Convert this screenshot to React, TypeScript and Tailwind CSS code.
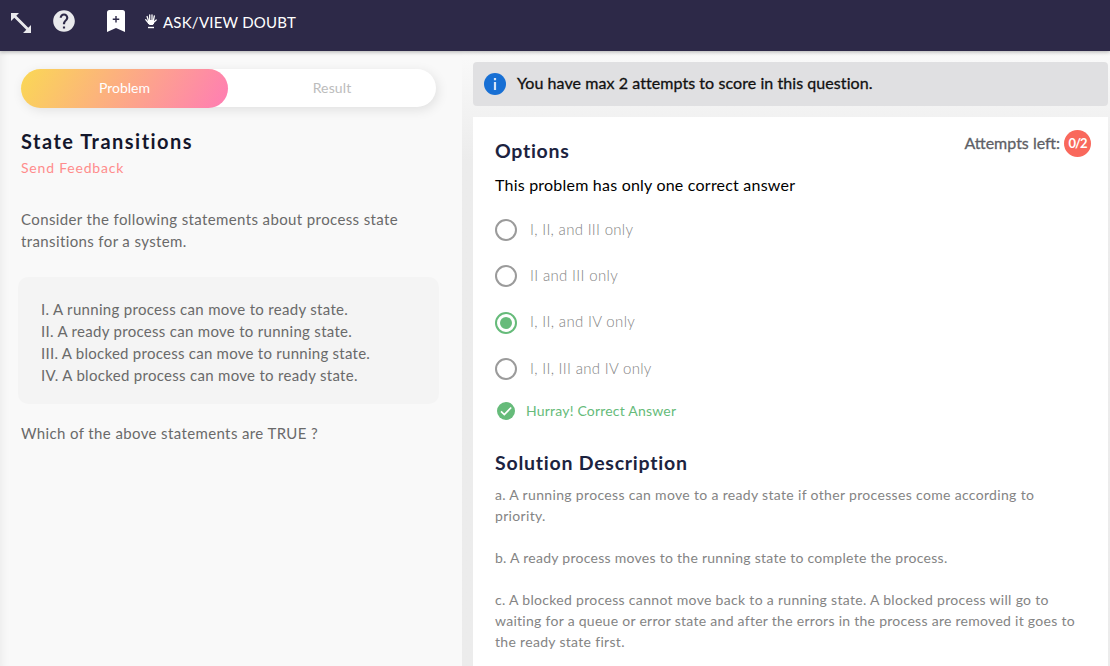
import type { ReactNode } from "react";

const statements = [
  { text: "I. A running process can move to ready state.", className: "tracking-[0.31px]" },
  { text: "II. A ready process can move to running state.", className: "tracking-[0.3px]" },
  { text: "III. A blocked process can move to running state.", className: "tracking-[0.26px]" },
  { text: "IV. A blocked process can move to ready state.", className: "tracking-[0.3px]" },
];

const options = [
  { text: "I, II, and III only", checked: false, className: "tracking-[0.304px]" },
  { text: "II and III only", checked: false, className: "tracking-[0.34px]" },
  { text: "I, II, and IV only", checked: true, className: "tracking-[0.34px]" },
  { text: "I, II, III and IV only", checked: false, className: "tracking-[0.31px]" },
];

function Header() {
  return (
    <header className="relative z-10 flex h-[51px] shrink-0 items-start bg-[#2d2948] text-white shadow-[0_1px_4px_rgba(0,0,0,0.3)]">
      <svg className="mt-[13px] ml-[11px] h-5 w-5 text-[#e9e9ec]" viewBox="0 0 20 20" fill="currentColor">
        <path d="M0 0h8L5.300 2.700 17.300 14.700 20 12v8h-8l3.300-3.300-12-12L0 8z" />
      </svg>
      <svg className="mt-[8px] ml-[20px] h-[26px] w-[26px] text-[#e9e9ec]" viewBox="0 0 24 24" fill="currentColor">
        <path d="M12 2C6.480 2 2 6.480 2 12s4.480 10 10 10 10-4.480 10-10S17.520 2 12 2zm1 17h-2v-2h2v2zm2.070-7.750-.9.920C13.450 12.900 13 13.500 13 15h-2v-.5c0-1.100.450-2.100 1.170-2.830l1.240-1.260c.370-.360.590-.860.590-1.410 0-1.100-.9-2-2-2s-2 .9-2 2H8c0-2.210 1.790-4 4-4s4 1.790 4 4c0 .880-.360 1.680-.930 2.250z" />
      </svg>
      <svg className="mt-[10px] ml-[30px] h-[22px] w-[18px]" viewBox="0 0 18 22">
        <path d="M2.500 0h13A2.500 2.500 0 0 1 18 2.500V22l-9-4-9 4V2.500A2.500 2.500 0 0 1 2.500 0z" fill="#fff" />
        <path d="M9 6v6.500M5.750 9.250h6.500" stroke="#2d2948" strokeWidth="1.400" />
      </svg>
      <svg className="mt-[14px] ml-[20px] h-[15px] w-[12px]" viewBox="0 0 12 15" fill="none" stroke="#fff" strokeLinecap="round">
        <path d="M2.100 2.500 3.600 7M4.700 1v5.500M7 .8v5.700M9.300 2 8.300 7M.7 5.700 3.500 9M11.200 6 8.500 8.500" strokeWidth="1.300" />
        <path d="M3 6h6v3.200L7.800 11H4.500L3 9.200z" fill="#fff" stroke="none" />
        <path d="M3 13.500h6" strokeWidth="1.400" strokeLinecap="butt" />
      </svg>
      <span className="mt-[12px] ml-[6px] text-[15px] leading-5 whitespace-nowrap tracking-[0.213px]">ASK/VIEW DOUBT</span>
    </header>
  );
}

function Tabs() {
  return (
    <div className="flex h-[38px] w-[415px] rounded-full bg-white text-[14px] shadow-[2px_3px_12px_rgba(0,0,0,0.1)]">
      <button className="h-[39px] w-[207px] rounded-full bg-linear-[120deg] from-[#fad855] to-[#ff7db4] pb-[2px] text-white">Problem</button>
      <button className="flex-1 pb-px text-[#bcbcbc] tracking-[0.12px]">Result</button>
    </div>
  );
}

function ProblemPanel() {
  return (
    <section className="flex w-[462px] shrink-0 flex-col bg-[#f9f9f9] pt-[18px] pl-[21px] shadow-[inset_10px_0_10px_-8px_rgba(0,0,0,0.06)]">
      <Tabs />
      <h1 className="mt-[20px] text-[20px] leading-7 font-bold whitespace-nowrap text-[#14172c] tracking-[1.480px]">State Transitions</h1>
      <a className="mt-[3px] text-[14px] leading-5 whitespace-nowrap text-[#ff8c8c] tracking-[0.8px]">Send Feedback</a>
      <div className="mt-[30px] text-[15px] leading-[22px] whitespace-nowrap text-[#6a6a6a] tracking-[0.378px]">
        <p>Consider the following statements about process state</p>
        <p>transitions for a system.</p>
        <ul className="mt-[25px] -ml-[3px] h-[127px] w-[421px] rounded-[10px] bg-[#f4f4f4] pt-[21px] pl-[23px]">
          {statements.map((s) => (
            <li key={s.text} className={s.className}>{s.text}</li>
          ))}
        </ul>
        <p className="mt-[18px]">Which of the above statements are TRUE ?</p>
      </div>
    </section>
  );
}

function Option({ checked, children }: { checked: boolean; children: ReactNode }) {
  return (
    <li className="flex h-[46.300px] items-center">
      <span className={checked ? "flex size-[22px] items-center justify-center rounded-full border-2 border-[#66bb7a]" : "size-[22px] rounded-full border-2 border-[#9b9b9b]"}>
        {checked && <span className="size-[12px] rounded-full bg-[#66bb7a]" />}
      </span>
      {children}
    </li>
  );
}

function Notice() {
  return (
    <div className="flex h-[44px] w-[635px] items-center rounded-[4px] bg-[#e0e0e2] pl-[11px]">
      <svg className="h-[22px] w-[22px]" viewBox="0 0 22 22">
        <circle cx="11" cy="11" r="11" fill="#176fd4" />
        <path d="M11 9v8M11 5v2.200" stroke="#d5e4f7" strokeWidth="2.200" />
      </svg>
      <span className="ml-[11px] pb-[2px] text-[16px] whitespace-nowrap text-[#111] tracking-[0.07px] [-webkit-text-stroke:0.3px_#111]">
        You have max 2 attempts to score in this question.
      </span>
    </div>
  );
}

function AnswerPanel() {
  return (
    <section className="flex min-w-0 flex-1 flex-col bg-linear-to-b from-[#fafafa] from-0% to-[#ececec] to-[110px] pt-[11px] pl-[11px]">
      <Notice />
      <div className="mt-[11px] flex w-[635px] flex-1 flex-col bg-white pt-[13px] pl-[22px] whitespace-nowrap">
        <div className="flex h-[42px] items-start justify-between pr-[17px]">
          <h2 className="mt-[7px] text-[19.500px] leading-7 font-bold text-[#1c2340] tracking-[0.720px]">Options</h2>
          <div className="flex h-[27px] items-center gap-1">
            <span className="pb-[2px] text-[16px] text-[#5e5f66] [-webkit-text-stroke:0.3px_#5e5f66]">Attempts left:</span>
            <span className="flex size-[27px] items-center justify-center rounded-full bg-[#f9685c] text-[13px] font-bold text-white tracking-[-1px]">0/2</span>
          </div>
        </div>
        <p className="mt-px text-[16px] leading-6 text-black tracking-[0.215px]">This problem has only one correct answer</p>
        <ul className="mt-[10px]">
          {options.map((o) => (
            <Option key={o.text} checked={o.checked}>
              <span className={"ml-[13px] pb-[2px] text-[15px] font-light text-[#848484] " + o.className}>{o.text}</span>
            </Option>
          ))}
        </ul>
        <div className="mt-[9px] flex h-5 items-center pl-[2px] text-[14px] text-[#66bb7a]">
          <svg className="h-[18px] w-[18px]" viewBox="0 0 18 18">
            <circle cx="9" cy="9" r="9" fill="#66bb7a" />
            <path d="m4 9.300 3.300 3.200L14.200 5.500" fill="none" stroke="#fff" strokeWidth="1.700" />
          </svg>
          <span className="ml-[11px] pb-px tracking-[0.2px]">Hurray! Correct Answer</span>
        </div>
        <h2 className="mt-[28px] text-[19.500px] leading-7 font-bold text-[#1c2340] tracking-[0.760px]">Solution Description</h2>
        <div className="mt-[7px] text-[14px] leading-[21px] text-[#848484]">
          <p className="tracking-[0.33px]">a. A running process can move to a ready state if other processes come according to<br />priority.</p>
          <p className="mt-[21px] tracking-[0.272px]">b. A ready process moves to the running state to complete the process.</p>
          <p className="mt-[21px] tracking-[0.315px]">
            c. A blocked process cannot move back to a running state. A blocked process will go to<br />
            <span className="tracking-[0.28px]">waiting for a queue or error state and after the errors in the process are removed it goes to</span><br />
            the ready state first.
          </p>
        </div>
      </div>
    </section>
  );
}

export default function App() {
  return (
    <div className="flex h-[666px] w-[1110px] flex-col overflow-hidden font-[Lato,sans-serif]">
      <Header />
      <main className="flex min-h-0 flex-1">
        <ProblemPanel />
        <AnswerPanel />
      </main>
    </div>
  );
}
